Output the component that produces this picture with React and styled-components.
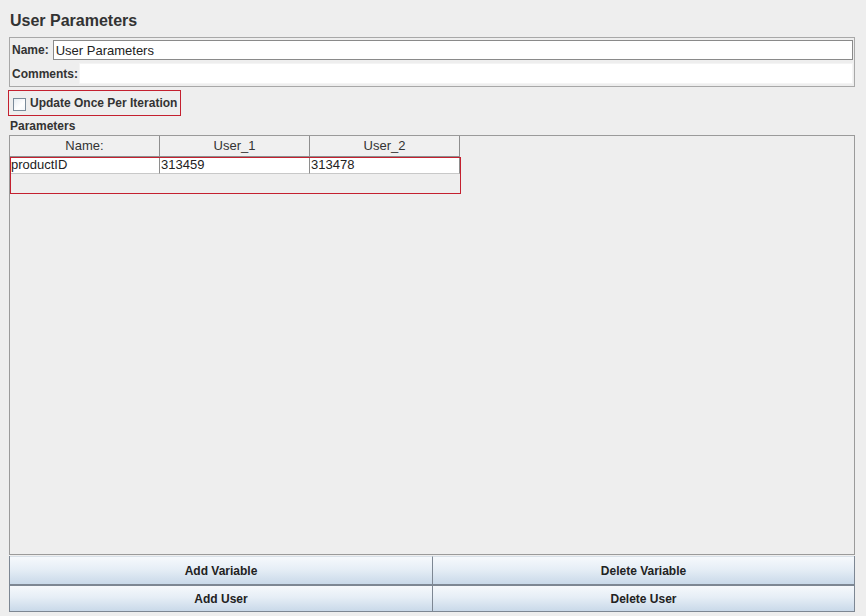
import React from 'react';
import styled, { createGlobalStyle } from 'styled-components';

const GlobalStyle = createGlobalStyle`
  html, body {
    margin: 0;
    padding: 0;
    background: #eeeeee;
  }
  body {
    font-family: "Liberation Sans", Arial, sans-serif;
    font-size: 12px;
    color: #333333;
  }
`

const Page = styled.div`
  width: 866px;
  height: 616px;
  box-sizing: border-box;
  padding: 0 11px 0 9px;
  background: #eeeeee;
  display: flex;
  flex-direction: column;
  overflow: hidden;
`

const Title = styled.h1`
  margin: 0;
  padding: 11px 0 0 1px;
  height: 26px;
  font-size: 16px;
  line-height: 20px;
  font-weight: bold;
  color: #333;
`

const InfoBox = styled.div`
  border: 1px solid #a8a8a8;
  padding: 1px 1px 0 1px;
  display: flex;
  flex-direction: column;
`

const InfoRow = styled.div`
  display: flex;
  align-items: center;
  height: ${p => p.$h}px;
`

const Label = styled.label`
  font-weight: bold;
  font-size: 12px;
  padding-left: 1px;
  margin-right: ${p => p.$gap}px;
  white-space: nowrap;
  color: #333;
`

const TextField = styled.div`
  flex: 1;
  height: ${p => p.$h}px;
  box-sizing: border-box;
  background: #fff;
  border: 1px solid ${p => p.$plain ? '#f4f4f4' : '#8a8a8a'};
  padding-left: 2px;
  display: flex;
  align-items: center;
  font-size: 13px;
  color: #222;
`

const Highlight = styled.div`
  border: 1px solid #c4202f;
`

const CheckRow = styled(Highlight)`
  align-self: flex-start;
  margin: 3px 0 0 -1px;
  height: 24px;
  padding: 0 3px 0 4px;
  display: flex;
  align-items: center;
  gap: 4px;
  font-weight: bold;
  font-size: 12px;
  color: #333;
`

const CheckBox = styled.span`
  width: 11px;
  height: 11px;
  border: 1px solid #7a8a99;
  background: linear-gradient(135deg, #e8edf2 0%, #ffffff 60%, #f4f7fa 100%);
  margin-top: 2px;
`

const SectionLabel = styled.div`
  font-weight: bold;
  font-size: 12px;
  padding-left: 1px;
  height: 18px;
  line-height: 18px;
  margin-top: 1px;
  color: #333;
`

const TablePanel = styled.div`
  position: relative;
  flex: 1;
  border: 1px solid #9a9a9a;
  background: #eeeeee;
`

const Grid = styled.div`
  display: grid;
  grid-template-columns: 150px 150px 150px;
  width: 450px;
`

const HeadCell = styled.div`
  height: 21px;
  box-sizing: border-box;
  border-right: 1px solid #8e8e8e;
  border-bottom: 1px solid #8e8e8e;
  background: #f0f0f0;
  text-align: center;
  line-height: 20px;
  font-size: 13px;
  color: #333;
`

const Cell = styled.div`
  height: 17px;
  box-sizing: border-box;
  background: #fff;
  border-right: 1px solid #8e8e8e;
  border-bottom: 1px solid #c8c8c8;
  padding-left: 1px;
  line-height: 16px;
  font-size: 13px;
  color: #222;
`

const RowMark = styled(Highlight)`
  position: absolute;
  left: 0;
  top: 21px;
  width: 449px;
  height: 35px;
  pointer-events: none;
`

const ButtonGrid = styled.div`
  display: grid;
  grid-template-columns: 1fr 1fr;
  margin-top: 1px;
  margin-bottom: 4px;
  border: 1px solid #7d8793;
  border-top: none;
`

const Button = styled.button`
  height: ${p => p.$last ? 27 : 28}px;
  font-family: "Liberation Sans", Arial, sans-serif;
  font-size: 12px;
  font-weight: bold;
  color: #222;
  border: none;
  border-top: ${p => p.$last ? '2px solid #7d8793' : '1px solid #d8e0e8'};
  border-left: ${p => p.$right ? '1px solid #7d8793' : 'none'};
  background: linear-gradient(#f6f9fc 0%, #e6eef6 45%, #c9d9e9 100%);
  padding: 0;
  cursor: pointer;
`

const App = () => {
  return (
    <Page>
      <GlobalStyle />
      <Title>User Parameters</Title>
      <InfoBox>
        <InfoRow $h={22}>
          <Label $gap={4}>Name:</Label>
          <TextField $h={20}>User Parameters</TextField>
        </InfoRow>
        <InfoRow $h={25}>
          <Label $gap={1}>Comments:</Label>
          <TextField $h={21} $plain />
        </InfoRow>
      </InfoBox>
      <CheckRow>
        <CheckBox />
        Update Once Per Iteration
      </CheckRow>
      <SectionLabel>Parameters</SectionLabel>
      <TablePanel>
        <Grid>
          <HeadCell>Name:</HeadCell>
          <HeadCell>User_1</HeadCell>
          <HeadCell>User_2</HeadCell>
          <Cell>productID</Cell>
          <Cell>313459</Cell>
          <Cell>313478</Cell>
        </Grid>
        <RowMark />
      </TablePanel>
      <ButtonGrid>
        <Button>Add Variable</Button>
        <Button $right>Delete Variable</Button>
        <Button $last>Add User</Button>
        <Button $last $right>Delete User</Button>
      </ButtonGrid>
    </Page>
  );
}

export default App
